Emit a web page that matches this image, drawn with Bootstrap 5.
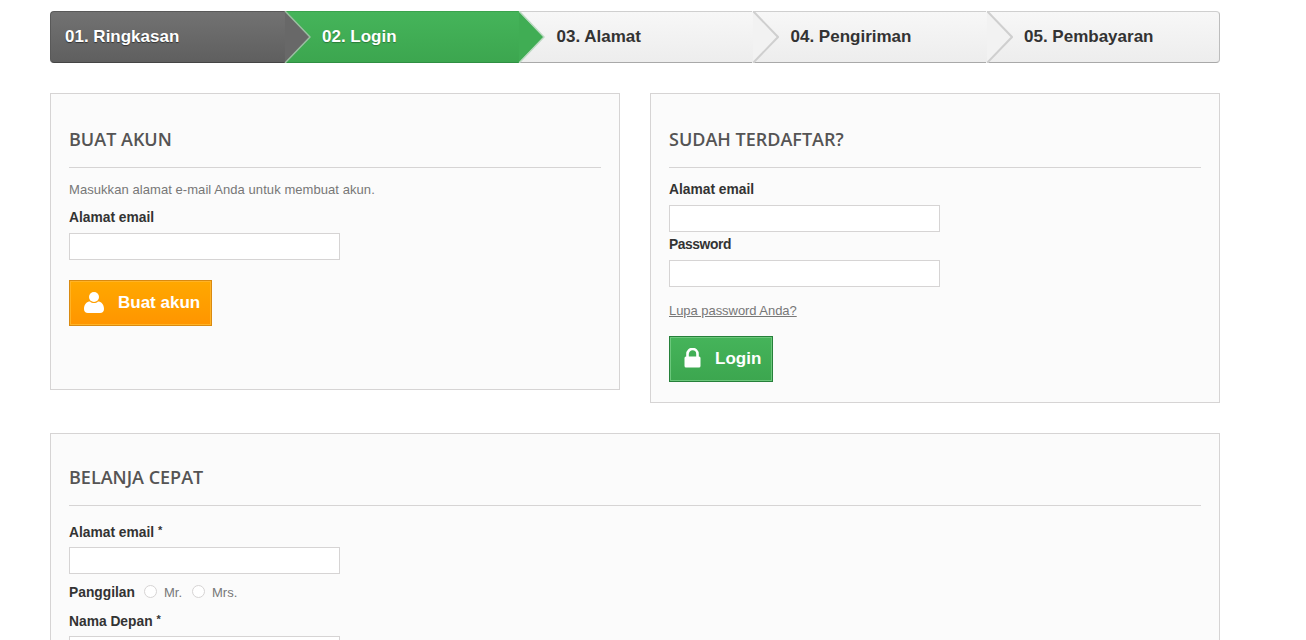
<!DOCTYPE html>
<html lang="id">
<head>
<meta charset="utf-8">
<title>Login</title>
<link href="https://cdn.jsdelivr.net/npm/bootstrap@5.3.0/dist/css/bootstrap.min.css" rel="stylesheet">
<style>
html,body{height:640px;overflow:hidden;background:#fff}
body{font-family:"Liberation Sans",Arial,sans-serif;font-size:13px;line-height:18px;color:#777}
.page-wrap{width:1170px;margin-left:50px;padding-top:11px}
.step-bar{height:52px;margin-bottom:30px;border-radius:4px}
.step-item{width:234px;height:52px;position:relative;padding:14px 0 0 15px;font-size:17px;font-weight:700;line-height:21px;color:#333;
 background:linear-gradient(#f7f7f7,#ededed);border:1px solid #cfcfcf;border-left:0;border-right:0;border-bottom-color:#a9a9a9}
.step-item:first-child{border-radius:4px 0 0 4px;border-left:1px solid #595959;padding-left:14px}
.step-item:last-child{border-radius:0 4px 4px 0;border-right:1px solid #bdbdbd}
.step-done{background:linear-gradient(#727272,#5f5f5f);border-color:#595959;border-bottom-color:#444;color:#fff;text-shadow:0 1px 1px #333}
.step-now{background:linear-gradient(#45b45a,#3ca64f);border-color:#3aa34d;border-bottom-color:#2f8f42;color:#fff;text-shadow:0 1px 1px #2a7a3a;padding-left:38px}
.step-plain{padding-left:38px}
.step-shift{padding-left:38.500px}
.step-arrow{position:absolute;left:100%;top:-1px;width:26px;height:52px;z-index:2;margin-left:1px}
.step-item:nth-child(1){z-index:5}.step-item:nth-child(2){z-index:4}.step-item:nth-child(3){z-index:3}.step-item:nth-child(4){z-index:2}
.step-item::after{content:"";position:absolute;left:100%;top:-1px;width:1px;height:52px;background:inherit}
.step-item:last-child::after{display:none}
.panel-col{width:570px}
.form-box{background:#fbfbfb;border:1px solid #d6d4d4;padding:29px 18px 0}
.box-a{height:297px}
.box-b{height:310px}
.box-c{height:400px;margin-top:30px}
.box-title{font-family:"Open Sans",sans-serif;font-size:18px;font-weight:600;line-height:22px;color:#555454;text-transform:uppercase;margin:5px 0 0;padding-bottom:17px;border-bottom:1px solid #d6d4d4}
.box-c .box-title{margin-top:3px}
.box-note{margin:13px 0 0;letter-spacing:.065px}
.field-label{display:block;font-size:13.8px;font-weight:700;color:#333;margin:0 0 6px;line-height:18px}
.field-input{display:block;width:271px;height:27px;border:1px solid #d6d4d4;background:#fff;padding:3px 5px}
.star{font-size:11px;position:relative;top:-3px}
.cta-btn{display:inline-flex;align-items:center;font-size:17px;font-weight:700;line-height:21px;color:#fff;border-radius:0;padding:0 0 2px}
.cta-orange{width:143px;height:46px;background:linear-gradient(#ffa800,#ff9500);border:1px solid #d98a10;box-shadow:inset 0 0 0 1px #ffb326;margin-top:20px;padding-left:14px}
.cta-green{width:104px;height:46px;background:linear-gradient(#45b45a,#3ca64f);border:1px solid #26803a;box-shadow:inset 0 0 0 1px #6cc77c;margin-top:16px;padding-left:14px}
.cta-btn svg{margin-right:14px;flex:none}
.forgot{color:#777;text-decoration:underline;display:block;margin-top:15px;letter-spacing:-.05px}
.choice-row{display:flex;align-items:center;margin-top:10px;height:18px}
.choice-label{margin:0 9px 0 0}
.choice-dot{width:13px;height:13px;border:1px solid #d6d4d4;border-radius:50%;background:#fff;margin-right:7px;position:relative;top:-2px}
.choice-text{margin-right:10px}
.gap-note{margin-top:10px}
.gap-first{margin-top:13px}
.gap-second{margin-top:4px;letter-spacing:-.4px}
.gap-quick{margin-top:18px;margin-bottom:5px}
.gap-name{margin-top:11px;margin-bottom:5px}
</style>
</head>
<body>
<div class="page-wrap">
  <div class="step-bar d-flex">
    <div class="step-item step-done">01. Ringkasan
      <svg class="step-arrow" viewBox="0 0 26 52"><path d="M0 0.5 L25 26 L0 51.5Z" fill="#686868"/><path d="M0 0 L25 26 L0 52" fill="none" stroke="#9bbfa2" stroke-width="1.5"/></svg></div>
    <div class="step-item step-now">02. Login
      <svg class="step-arrow" viewBox="0 0 26 52"><path d="M0 0.5 L25 26 L0 51.5Z" fill="#40ad54"/><path d="M0 0 L25 26 L0 52" fill="none" stroke="#bcd9c2" stroke-width="1.5"/></svg></div>
    <div class="step-item step-shift">03. Alamat
      <svg class="step-arrow" viewBox="0 0 26 52"><path d="M0 0.5 L25 26 L0 51.5Z" fill="#f2f2f2"/><path d="M0 0 L25 26 L0 52" fill="none" stroke="#cfcfcf" stroke-width="2"/></svg></div>
    <div class="step-item step-shift">04. Pengiriman
      <svg class="step-arrow" viewBox="0 0 26 52"><path d="M0 0.5 L25 26 L0 51.5Z" fill="#f2f2f2"/><path d="M0 0 L25 26 L0 52" fill="none" stroke="#cfcfcf" stroke-width="2"/></svg></div>
    <div class="step-item step-plain">05. Pembayaran</div>
  </div>

  <div class="d-flex align-items-start justify-content-between">
    <div class="panel-col form-box box-a">
      <h3 class="box-title">Buat akun</h3>
      <p class="box-note">Masukkan alamat e-mail Anda untuk membuat akun.</p>
      <label class="field-label gap-note">Alamat email</label>
      <input class="field-input" type="text">
      <button class="btn cta-btn cta-orange" type="button">
        <svg width="20" height="22" viewBox="0 0 20 22"><circle cx="10" cy="6" r="5" fill="#fff"/><path d="M0 18c0-5 3-7.500 6-7.500 1 1 2.500 1.500 4 1.500s3-.5 4-1.500c3 0 6 2.500 6 7.500 0 2.500-1.500 4-4 4H4c-2.500 0-4-1.500-4-4z" fill="#fff"/></svg>
        Buat akun</button>
    </div>
    <div class="panel-col form-box box-b">
      <h3 class="box-title">Sudah terdaftar?</h3>
      <label class="field-label gap-first">Alamat email</label>
      <input class="field-input" type="text">
      <label class="field-label gap-second">Password</label>
      <input class="field-input" type="text">
      <a class="forgot" href="#">Lupa password Anda?</a>
      <button class="btn cta-btn cta-green" type="button">
        <svg width="17" height="20" viewBox="0 0 17 20"><path d="M3.500 9V6a5 5 0 0 1 10 0v3" fill="none" stroke="#fff" stroke-width="2.600"/><rect x="0.500" y="8.500" width="16" height="11" rx="1.500" fill="#fff"/></svg>
        Login</button>
    </div>
  </div>

  <div class="form-box box-c">
    <h3 class="box-title">Belanja cepat</h3>
    <label class="field-label gap-quick">Alamat email <sup class="star">*</sup></label>
    <input class="field-input" type="text">
    <div class="choice-row">
      <span class="field-label choice-label">Panggilan</span>
      <span class="choice-dot"></span><span class="choice-text">Mr.</span>
      <span class="choice-dot"></span><span class="choice-text">Mrs.</span>
    </div>
    <label class="field-label gap-name">Nama Depan <sup class="star">*</sup></label>
    <input class="field-input" type="text">
  </div>
</div>
<script src="https://cdn.jsdelivr.net/npm/bootstrap@5.3.0/dist/js/bootstrap.bundle.min.js"></script>
</body>
</html>
